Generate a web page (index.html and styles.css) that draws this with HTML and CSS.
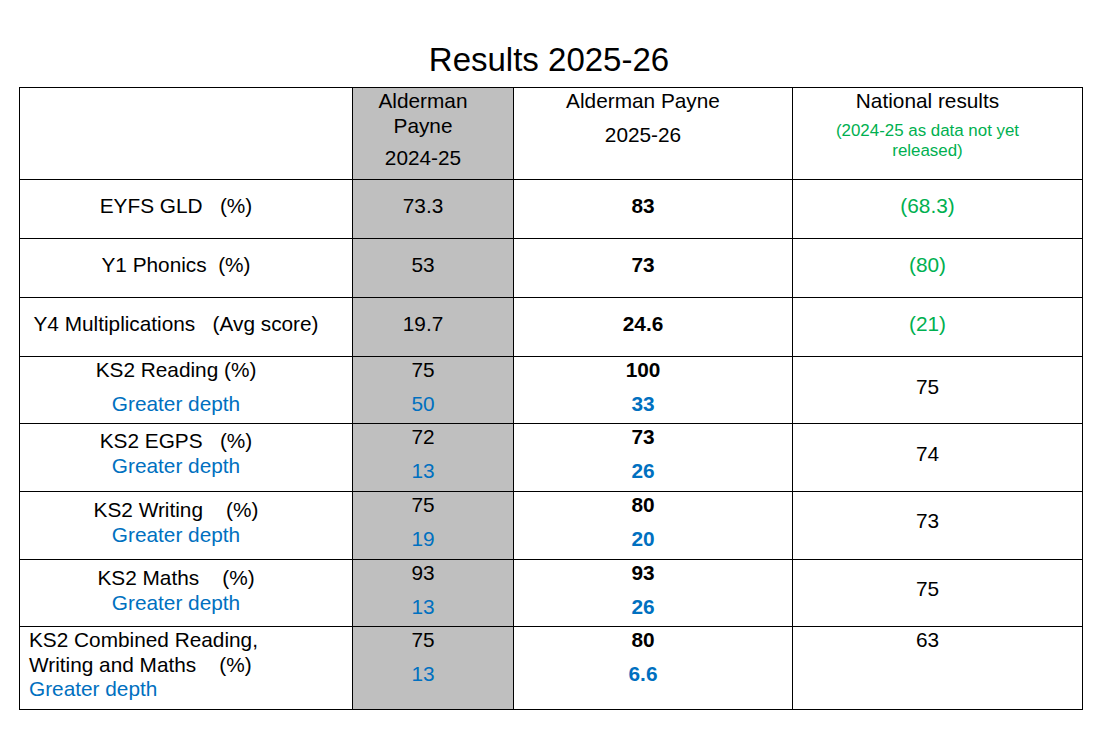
FILE: index.html
```html
<!DOCTYPE html>
<html lang="en">
<head>
<meta charset="utf-8">
<title>Results 2025-26</title>
<link rel="stylesheet" href="styles.css">
</head>
<body>
<div class="page">
  <h1 class="title">Results 2025-26</h1>
  <table class="results">
    <colgroup>
      <col class="c1"><col class="c2"><col class="c3"><col class="c4">
    </colgroup>
    <tr class="r-head">
      <td class="pt1"></td>
      <td class="last pt1"><div class="p gap8">Alderman Payne</div><div class="p">2024-25</div></td>
      <td class="pt1"><div class="p gap9">Alderman Payne</div><div class="p">2025-26</div></td>
      <td class="pt1"><div class="p gap7">National results</div><div class="p note">(2024-25 as data not yet released)</div></td>
    </tr>
    <tr class="r-single">
      <td class="pt14">EYFS GLD &nbsp;&nbsp;(%)</td>
      <td class="last pt14">73.3</td>
      <td class="pt14 bold">83</td>
      <td class="pt14 green">(68.3)</td>
    </tr>
    <tr class="r-single">
      <td class="pt14">Y1 Phonics &nbsp;(%)</td>
      <td class="last pt14">53</td>
      <td class="pt14 bold">73</td>
      <td class="pt14 green">(80)</td>
    </tr>
    <tr class="r-single">
      <td class="pt14">Y4 Multiplications &nbsp;&nbsp;(Avg score)</td>
      <td class="last pt14">19.7</td>
      <td class="pt14 bold">24.6</td>
      <td class="pt14 green">(21)</td>
    </tr>
    <tr class="r-ks2a">
      <td class="pt1"><div class="p gap10">KS2 Reading (%)</div><div class="p blue">Greater depth</div></td>
      <td class="last pt1"><div class="p gap10">75</div><div class="p blue">50</div></td>
      <td class="pt1 bold"><div class="p gap10">100</div><div class="p blue">33</div></td>
      <td class="pt18">75</td>
    </tr>
    <tr class="r-ks2b">
      <td class="pt5">KS2 EGPS &nbsp;&nbsp;(%)<br><span class="blue">Greater depth</span></td>
      <td class="last pt1"><div class="p gap10">72</div><div class="p blue">13</div></td>
      <td class="pt1 bold"><div class="p gap10">73</div><div class="p blue">26</div></td>
      <td class="pt18">74</td>
    </tr>
    <tr class="r-ks2b">
      <td class="pt6">KS2 Writing &nbsp;&nbsp;&nbsp;(%)<br><span class="blue">Greater depth</span></td>
      <td class="last pt1"><div class="p gap10">75</div><div class="p blue">19</div></td>
      <td class="pt1 bold"><div class="p gap10">80</div><div class="p blue">20</div></td>
      <td class="pt17">73</td>
    </tr>
    <tr class="r-ks2a">
      <td class="pt6">KS2 Maths &nbsp;&nbsp;&nbsp;(%)<br><span class="blue">Greater depth</span></td>
      <td class="last pt1"><div class="p gap10">93</div><div class="p blue">13</div></td>
      <td class="pt1 bold"><div class="p gap10">93</div><div class="p blue">26</div></td>
      <td class="pt17">75</td>
    </tr>
    <tr class="r-comb">
      <td class="pt1 left">KS2 Combined Reading,<br>Writing and Maths &nbsp;&nbsp;&nbsp;(%)<br><span class="blue">Greater depth</span></td>
      <td class="last pt1"><div class="p gap10">75</div><div class="p blue">13</div></td>
      <td class="pt1 bold"><div class="p gap10">80</div><div class="p blue">6.6</div></td>
      <td class="pt1">63</td>
    </tr>
  </table>
</div>
</body>
</html>
```
FILE: styles.css
```css
html, body {
  margin: 0;
  padding: 0;
  background: #ffffff;
}

.page {
  padding: 41px 0 0 19px;
  font-family: "Liberation Sans", Arial, sans-serif;
  color: #000000;
}

.title {
  width: 1060px;
  margin: 0 0 8px 0;
  text-align: center;
  font-size: 33px;
  font-weight: normal;
  line-height: 38px;
}

.results {
  border-collapse: collapse;
  table-layout: fixed;
  width: 1064px;
  font-size: 20.8px;
  line-height: 24.5px;
}

.c1 { width: 333px; }
.c2 { width: 161px; }
.c3 { width: 279px; }
.c4 { width: 290px; }

.results td {
  border: 1px solid #000000;
  padding: 0 29px 0 9px;
  vertical-align: top;
  text-align: center;
}

.r-head { height: 92px; }
.r-single { height: 59px; }
.r-ks2a { height: 67px; }
.r-ks2b { height: 68px; }
.r-comb { height: 83px; }

.results td.last {
  background: #bfbfbf;
}

.results td.left {
  text-align: left;
}

.pt1 { padding-top: 1px !important; }
.pt5 { padding-top: 5px !important; }
.pt6 { padding-top: 6px !important; }
.pt14 { padding-top: 14px !important; }
.pt17 { padding-top: 17px !important; }
.pt18 { padding-top: 18px !important; }

.p { margin: 0; }
.gap7 { margin-bottom: 7px; }
.gap8 { margin-bottom: 8px; }
.gap9 { margin-bottom: 9px; }
.gap10 { margin-bottom: 9px; }

.note {
  color: #00b050;
  font-size: 16.9px;
  line-height: 20px;
}

.bold { font-weight: bold; }
.blue { color: #0070c0; }
.green { color: #00b050; }
```
